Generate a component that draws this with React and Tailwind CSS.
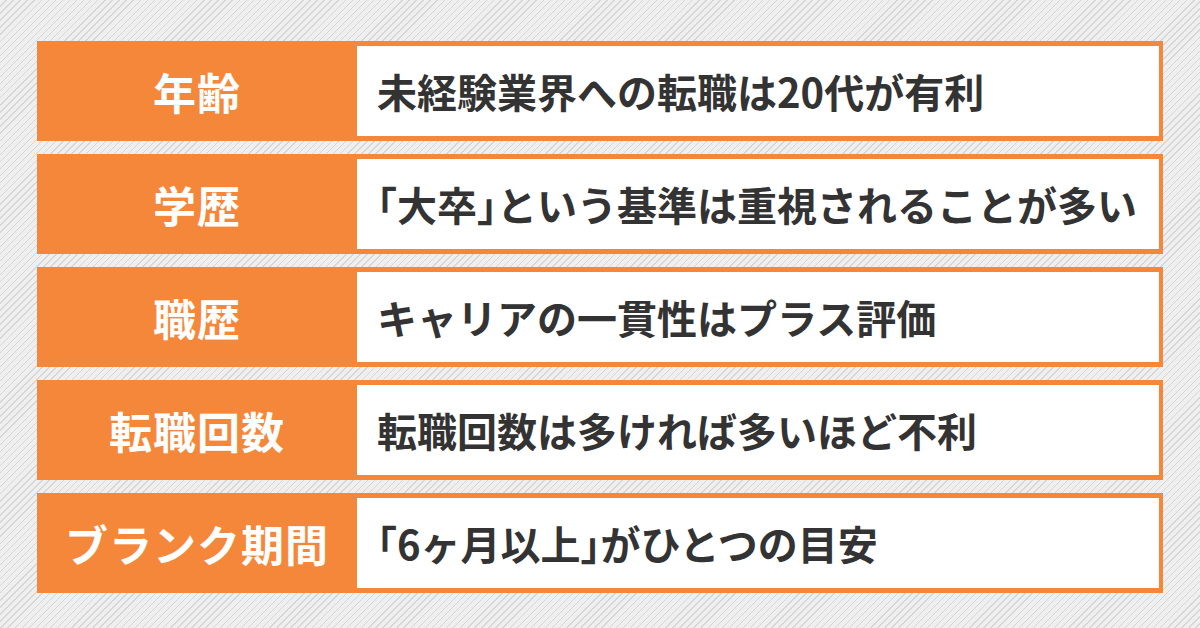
const rows = [
  { label: '年齢', text: '未経験業界への転職は20代が有利' },
  { label: '学歴', text: '「大卒」という基準は重視されることが多い' },
  { label: '職歴', text: 'キャリアの一貫性はプラス評価' },
  { label: '転職回数', text: '転職回数は多ければ多いほど不利' },
  { label: 'ブランク期間', text: '「6ヶ月以上」がひとつの目安' },
];

// brackets are set half-width, the rest keeps full-width spacing
function Phrase({ text }) {
  return text.split(/([「」])/).map((part, i) =>
    part === '「' || part === '」' ? (
      <span key={i} className="[font-feature-settings:'halt']">
        {part}
      </span>
    ) : (
      <span key={i}>{part}</span>
    )
  );
}

export default function App() {
  return (
    <div
      className="w-[1200px] h-[628px] overflow-hidden bg-[repeating-linear-gradient(135deg,#efefef_0px,#efefef_4px,#d6d6d6_4px,#d6d6d6_5px)] pt-[41px] pl-[37px]"
      style={{ fontFamily: '"Noto Sans CJK JP", "Noto Sans", sans-serif' }}
    >
      <div className="w-[1126px] flex flex-col gap-[13px]">
        {rows.map((row) => (
          <div key={row.label} className="h-[100px] flex bg-[#f5873a] pr-[4px] py-[5px]">
            {/* label cell */}
            <div className="w-[320px] shrink-0 flex items-center justify-center text-white font-bold text-[43px] leading-none tracking-[1px]">
              {row.label}
            </div>
            {/* value cell */}
            <div className="flex-1 bg-white flex items-center pl-[20px] text-[#333333] font-bold text-[40px] leading-none whitespace-nowrap">
              <Phrase text={row.text} />
            </div>
          </div>
        ))}
      </div>
    </div>
  );
}
